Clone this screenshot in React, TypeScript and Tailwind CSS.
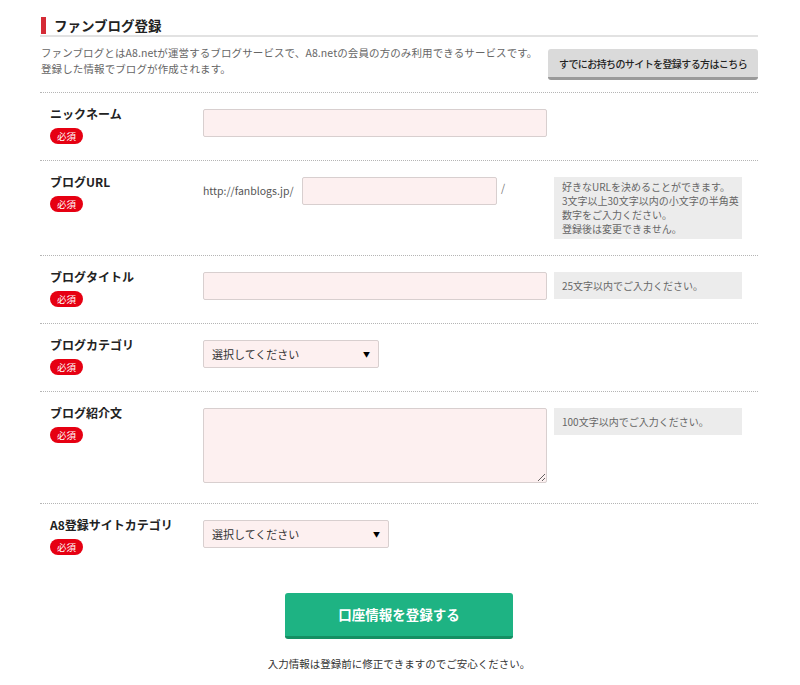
import type { ReactNode } from "react"

// Fan blog sign-up form: a title bar, short intro with a side link button,
// then dotted-rule rows (label + 必須 badge on the left, control + hint on the right).

const FONT = { fontFamily: '"Noto Sans CJK JP", "Noto Sans", sans-serif' }

const fieldBox = "rounded-[2px] border border-[#d8cfcf] bg-[#fdf0f0] outline-none"

function Required() {
    return (
        <span className="mt-[5px] block h-[16px] w-[33px] rounded-full bg-[#e60012] text-center text-[9.5px] leading-[16px] text-white">
            必須
        </span>
    )
}

function Hint({ children }: { children: ReactNode }) {
    return (
        <div className="mt-1 w-[188px] bg-[#ececec] px-2 py-[6px] text-[10px] leading-[15px] text-[#666]">
            {children}
        </div>
    )
}

function Row({ label, children }: { label: string; children: ReactNode }) {
    return (
        <div className="flex border-t border-dotted border-[#b5b5b5] pt-3 pb-4">
            <div className="w-[163px] shrink-0 pl-[10px]">
                <div className="text-[12px] font-bold leading-[18px] text-[#222]">{label}</div>
                <Required />
            </div>
            <div className="flex flex-1 items-start">{children}</div>
        </div>
    )
}

function SelectBox({ width }: { width: string }) {
    return (
        <div className={`relative mt-1 ${width}`}>
            <select className={`${fieldBox} h-[28px] w-full appearance-none pl-[8px] text-[11px] text-[#333]`}>
                <option>選択してください</option>
            </select>
            <span className="pointer-events-none absolute right-[9px] top-[9px] text-[7px] leading-[10px] text-black">
                ▼
            </span>
        </div>
    )
}

export default function App() {
    return (
        <div className="min-h-[685px] bg-white" style={FONT}>
            <div className="ml-[40px] w-[718px] pt-[15px]">
                <div className="box-content flex h-[20px] items-center border-b-2 border-[#e2e2e2]">
                    <span className="ml-[1px] h-[17px] w-[5px] bg-[#d52b36]" />
                    <h1 className="ml-[8px] text-[13.5px] font-bold leading-[20px] text-[#222]">ファンブログ登録</h1>
                </div>

                <div className="flex items-start justify-between pt-2 pb-3">
                    <p className="pl-[1px] text-[10.5px] leading-[16px] tracking-[0.01em] text-[#666]">
                        ファンブログとはA8.netが運営するブログサービスで、A8.netの会員の方のみ利用できるサービスです。
                        <br />
                        登録した情報でブログが作成されます。
                    </p>
                    <button
                        type="button"
                        className="mt-1 flex h-[31px] w-[210px] shrink-0 items-center justify-center rounded-[3px] border-b-[3px] border-[#9a9a9a] bg-[#dadada] text-[10px] font-medium tracking-[-0.06em] text-[#222]"
                    >
                        すでにお持ちのサイトを登録する方はこちら
                    </button>
                </div>

                <Row label="ニックネーム">
                    <input className={`${fieldBox} mt-1 h-[28px] w-[344px]`} />
                </Row>

                <Row label="ブログURL">
                    <div className="mt-1 flex w-[351px] items-start">
                        <span className="w-[99px] text-[10.5px] leading-[28px] text-[#555]">http://fanblogs.jp/</span>
                        <input className={`${fieldBox} h-[28px] w-[195px]`} />
                        <span className="ml-[4px] text-[10.5px] leading-[22px] text-[#777]">/</span>
                    </div>
                    <div className="mt-1 w-[188px] bg-[#ececec] px-2 py-[3px] text-[10px] leading-[14px] text-[#666]">
                        <span className="block whitespace-nowrap">好きなURLを決めることができます。</span>
                        <span className="block whitespace-nowrap">3文字以上30文字以内の小文字の半角英</span>
                        <span className="block whitespace-nowrap">数字をご入力ください。</span>
                        <span className="block whitespace-nowrap">登録後は変更できません。</span>
                    </div>
                </Row>

                <Row label="ブログタイトル">
                    <div className="w-[351px]">
                        <input className={`${fieldBox} mt-1 h-[28px] w-[344px]`} />
                    </div>
                    <Hint>25文字以内でご入力ください。</Hint>
                </Row>

                <Row label="ブログカテゴリ">
                    <SelectBox width="w-[176px]" />
                </Row>

                <Row label="ブログ紹介文">
                    <div className="w-[351px]">
                        <textarea className={`${fieldBox} mt-1 mb-[4px] block h-[75px] w-[344px] resize`} />
                    </div>
                    <Hint>100文字以内でご入力ください。</Hint>
                </Row>

                <Row label="A8登録サイトカテゴリ">
                    <SelectBox width="w-[186px]" />
                </Row>

                <div className="mt-[22px] flex flex-col items-center">
                    <button
                        type="button"
                        className="flex h-[46px] w-[228px] items-center justify-center rounded-[3px] border-b-[3px] border-[#158f63] bg-[#1eb383] text-[13.5px] font-bold text-white"
                    >
                        口座情報を登録する
                    </button>
                    <p className="mt-[17px] text-[10.5px] leading-[16px] text-[#333]">
                        入力情報は登録前に修正できますのでご安心ください。
                    </p>
                </div>
            </div>
        </div>
    )
}
